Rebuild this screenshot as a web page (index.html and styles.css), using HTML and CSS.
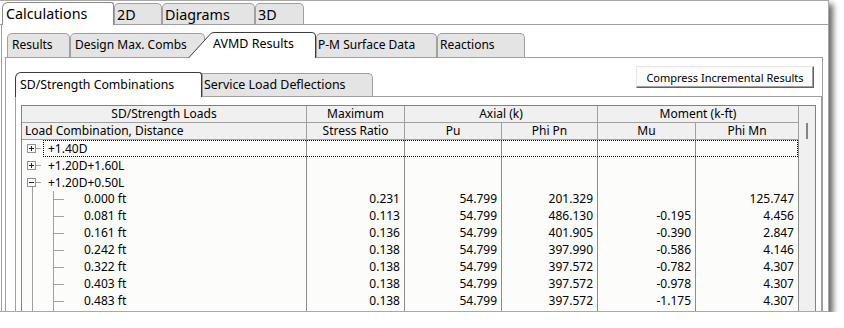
FILE: index.html
```html
<!DOCTYPE html>
<html lang="en">
<head>
    <meta charset="UTF-8">
    <title>Calculations</title>
    <link rel="stylesheet" href="styles.css">
</head>
<body>
    <div class="window">
        <div class="tabstrip top-strip">
            <div class="tab top-tab active calc">Calculations</div>
            <div class="tab top-tab t-2d">2D</div>
            <div class="tab top-tab t-diag">Diagrams</div>
            <div class="tab top-tab t-3d">3D</div>
        </div>
        <div class="outer">
            <div class="tabstrip mid-strip">
                <div class="tab mid-tab t-results">Results</div>
                <div class="tab mid-tab t-design">Design Max. Combs</div>
                <div class="tab mid-tab avmd">
                    <svg class="avmd-shape" width="128" height="26" viewBox="0 0 128 26">
                        <path d="M0.5 26 L21.5 3 Q23 0.5 26 0.5 L124 0.5 Q127.5 0.5 127.5 4 L127.5 26" fill="#fff" stroke="#3c3c3c"/>
                    </svg>
                    <span class="avmd-label">AVMD Results</span>
                </div>
                <div class="tab mid-tab t-pm">P-M Surface Data</div>
                <div class="tab mid-tab t-react">Reactions</div>
            </div>
            <div class="mid">
                <div class="toolbar">
                    <div class="tab low-tab active t-sd">SD/Strength Combinations</div>
                    <div class="tab low-tab t-svc">Service Load Deflections</div>
                    <button class="compress">Compress Incremental Results</button>
                </div>
                <div class="inner">
                    <div class="table">
                        <div class="grid">
                            <div class="hrow top-head">
                                <div class="cell center">SD/Strength Loads</div>
                                <div class="cell center">Maximum</div>
                                <div class="cell center">Axial (k)</div>
                                <div class="cell center">Moment (k-ft)</div>
                            </div>
                            <div class="hrow cols">
                                <div class="cell left">Load Combination, Distance</div>
                                <div class="cell center">Stress Ratio</div>
                                <div class="cell center">Pu</div>
                                <div class="cell center">Phi Pn</div>
                                <div class="cell center">Mu</div>
                                <div class="cell center">Phi Mn</div>
                            </div>

                            <div class="row cols focused">
                                <div class="cell node"><span class="box plus"></span><span class="tick"></span>+1.40D</div>
                                <div class="cell num"></div>
                                <div class="cell num"></div>
                                <div class="cell num"></div>
                                <div class="cell num"></div>
                                <div class="cell num"></div>
                                <div class="focus"></div>
                            </div>
                            <div class="row cols">
                                <div class="cell node"><span class="box plus"></span><span class="tick"></span>+1.20D+1.60L</div>
                                <div class="cell num"></div>
                                <div class="cell num"></div>
                                <div class="cell num"></div>
                                <div class="cell num"></div>
                                <div class="cell num"></div>
                            </div>
                            <div class="row cols">
                                <div class="cell node open"><span class="box"></span><span class="tick"></span>+1.20D+0.50L</div>
                                <div class="cell num"></div>
                                <div class="cell num"></div>
                                <div class="cell num"></div>
                                <div class="cell num"></div>
                                <div class="cell num"></div>
                            </div>
                            <div class="row cols">
                                <div class="cell leaf">0.000 ft</div>
                                <div class="cell num">0.231</div>
                                <div class="cell num">54.799</div>
                                <div class="cell num">201.329</div>
                                <div class="cell num"></div>
                                <div class="cell num">125.747</div>
                            </div>
                            <div class="row cols">
                                <div class="cell leaf">0.081 ft</div>
                                <div class="cell num">0.113</div>
                                <div class="cell num">54.799</div>
                                <div class="cell num">486.130</div>
                                <div class="cell num">-0.195</div>
                                <div class="cell num">4.456</div>
                            </div>
                            <div class="row cols">
                                <div class="cell leaf">0.161 ft</div>
                                <div class="cell num">0.136</div>
                                <div class="cell num">54.799</div>
                                <div class="cell num">401.905</div>
                                <div class="cell num">-0.390</div>
                                <div class="cell num">2.847</div>
                            </div>
                            <div class="row cols">
                                <div class="cell leaf">0.242 ft</div>
                                <div class="cell num">0.138</div>
                                <div class="cell num">54.799</div>
                                <div class="cell num">397.990</div>
                                <div class="cell num">-0.586</div>
                                <div class="cell num">4.146</div>
                            </div>
                            <div class="row cols">
                                <div class="cell leaf">0.322 ft</div>
                                <div class="cell num">0.138</div>
                                <div class="cell num">54.799</div>
                                <div class="cell num">397.572</div>
                                <div class="cell num">-0.782</div>
                                <div class="cell num">4.307</div>
                            </div>
                            <div class="row cols">
                                <div class="cell leaf">0.403 ft</div>
                                <div class="cell num">0.138</div>
                                <div class="cell num">54.799</div>
                                <div class="cell num">397.572</div>
                                <div class="cell num">-0.978</div>
                                <div class="cell num">4.307</div>
                            </div>
                            <div class="row cols">
                                <div class="cell leaf">0.483 ft</div>
                                <div class="cell num">0.138</div>
                                <div class="cell num">54.799</div>
                                <div class="cell num">397.572</div>
                                <div class="cell num">-1.175</div>
                                <div class="cell num">4.307</div>
                            </div>
                            <div class="row cols">
                                <div class="cell leaf"></div>
                                <div class="cell num"></div>
                                <div class="cell num"></div>
                                <div class="cell num"></div>
                                <div class="cell num"></div>
                                <div class="cell num"></div>
                            </div>
                        </div>
                        <div class="scroll"><div class="thumb"></div></div>
                    </div>
                </div>
            </div>
        </div>
    </div>
</body>
</html>
```

FILE: styles.css
```css
* {
    box-sizing: border-box;
}
body {
    margin: 0;
    background: #fff;
    font-family: "Noto Sans", "Open Sans", sans-serif;
    font-size: 12px;
    color: #000;
}
.window {
    width: 829px;
    height: 312px;
    overflow: hidden;
    background: #fff;
    border: 1px solid #a8a8a8;
    border-left: none;
    box-shadow: 4px 4px 6px rgba(0, 0, 0, 0.6);
}

/* tab strips */
.tabstrip {
    display: flex;
    align-items: flex-end;
    border-bottom: 1px solid #a0a0a0;
}
.tab {
    border: 1px solid #a0a0a0;
    border-bottom: none;
    background: #e4e4e4;
    border-radius: 5px 5px 0 0;
    white-space: nowrap;
}
.tab.active {
    position: relative;
    z-index: 1;
    margin-bottom: -1px;
    background: #fff;
    border-color: #3c3c3c;
}

.top-strip {
    height: 24px;
    padding-left: 2px;
}
.top-tab {
    height: 21px;
    padding-left: 2px;
    font-size: 14.3px;
    line-height: 21px;
}
.top-tab.active {
    height: 23px;
    padding-left: 3px;
    line-height: 22px;
    border-color: #8a8a8a;
    border-radius: 6px 3px 0 0;
}
.calc { width: 112px; }
.t-2d { width: 48px; }
.t-diag { width: 93px; }
.t-3d { width: 49px; }

.outer {
    margin-left: 1px;
    border-left: 1px solid #a0a0a0;
    padding: 6px 5px 0 3px;
}
.mid-strip {
    height: 27px;
    padding-left: 2px;
}
.mid-tab {
    height: 24px;
    padding-left: 4px;
    line-height: 22px;
}
.t-results { width: 63px; }
.t-design { width: 135px; }
.t-pm { width: 121px; padding-left: 1px; }
.t-react { width: 88px; padding-left: 2px; }
.avmd {
    position: relative;
    z-index: 1;
    width: 128px;
    height: 26px;
    margin-left: -17px;
    margin-bottom: -1px;
    padding-left: 25px;
    border: none;
    background: none;
    line-height: 24px;
    font-size: 12.5px;
}
.avmd-shape {
    position: absolute;
    left: 0;
    top: 0;
}
.avmd-label {
    position: relative;
}

.mid {
    border-left: 1px solid #a0a0a0;
    border-right: 1px solid #a0a0a0;
    padding-left: 9px;
    height: 260px;
}
.toolbar {
    display: flex;
    align-items: flex-end;
    height: 39px;
    border-bottom: 1px solid #a0a0a0;
}
.low-tab {
    height: 23px;
    line-height: 22px;
}
.low-tab.active {
    height: 25px;
    line-height: 24px;
    border-radius: 6px 3px 0 0;
}
.t-sd {
    width: 187px;
    padding-left: 4px;
    font-size: 12.3px;
}
.t-svc {
    width: 171px;
    padding-left: 1px;
    font-size: 12.4px;
    border-radius: 0 5px 0 0;
}
.compress {
    align-self: flex-start;
    margin: 8px 8px 0 auto;
    width: 178px;
    height: 22px;
    padding: 0;
    font-family: inherit;
    font-size: 11px;
    color: #000;
    background: #fcfcfc;
    border: 1px solid;
    border-color: #e6e6e6 #646464 #646464 #e6e6e6;
    box-shadow: inset -1px -1px 0 #a0a0a0;
}

.inner {
    border-left: 1px solid #a0a0a0;
    border-right: 1px solid #a0a0a0;
    padding: 8px 5px 0 5px;
    height: 230px;
}

/* grid */
.table {
    display: flex;
    border: 1px solid #828282;
    background: #fcfcfb;
}
.grid {
    width: 777px;
}
.hrow, .row {
    display: grid;
    height: 17px;
}
.hrow {
    background: #f0f0f0;
    border-bottom: 1px solid #a0a0a0;
}
.top-head {
    grid-template-columns: 285px 98px 193px 201px;
}
.cols {
    grid-template-columns: 285px 98px 97px 96px 98px 103px;
}
.cell {
    border-right: 1px solid #a0a0a0;
    line-height: 16px;
    white-space: nowrap;
    overflow: hidden;
}
.row .cell {
    border-right-color: #8c8c8c;
}
.center { text-align: center; }
.left { padding-left: 3px; }
.num {
    text-align: right;
    padding-right: 4px;
}
.row {
    position: relative;
}
.focus {
    position: absolute;
    left: 21px;
    top: 0;
    width: 755px;
    height: 17px;
    border: 1px dotted #000;
}

/* tree */
.node {
    display: flex;
    align-items: center;
    padding-left: 5px;
}
.box {
    width: 9px;
    height: 9px;
    border: 1px solid #919191;
    background: linear-gradient(#222, #222) center / 5px 1px no-repeat;
}
.box.plus {
    background:
        linear-gradient(#222, #222) center / 5px 1px no-repeat,
        linear-gradient(#222, #222) center / 1px 5px no-repeat;
}
.tick {
    width: 5px;
    height: 1px;
    margin-right: 7px;
    background: #a0a0a0;
}
.open {
    background: linear-gradient(#a0a0a0, #a0a0a0) 10px 13px / 1px 4px no-repeat;
}
.leaf {
    padding-left: 62px;
    background:
        linear-gradient(#a0a0a0, #a0a0a0) 10px 0 / 1px 100% no-repeat,
        linear-gradient(#a0a0a0, #a0a0a0) 31px 0 / 1px 100% no-repeat,
        linear-gradient(#a0a0a0, #a0a0a0) 32px 8px / 10px 1px no-repeat;
}

.scroll {
    width: 16px;
    background: #f0f0f0;
    padding: 17px 0 0 7px;
}
.thumb {
    width: 2px;
    height: 16px;
    background: #858585;
}
```
